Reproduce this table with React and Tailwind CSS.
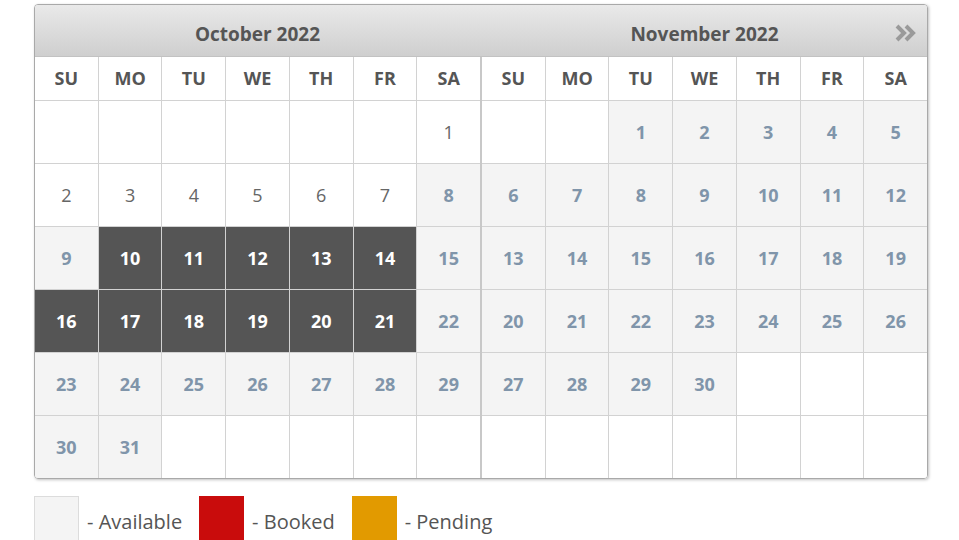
import React from "react";

const DOW = ["SU", "MO", "TU", "WE", "TH", "FR", "SA"];

const october = (() => {
  const cells = Array(6).fill(null);
  for (let d = 1; d <= 31; d++) {
    let type = "available";
    if (d <= 7) type = "past";
    if ((d >= 10 && d <= 14) || (d >= 16 && d <= 21)) type = "booked";
    cells.push({ d, type });
  }
  while (cells.length < 42) cells.push(null);
  return cells;
})();

const november = (() => {
  const cells = Array(2).fill(null);
  for (let d = 1; d <= 30; d++) cells.push({ d, type: "available" });
  while (cells.length < 42) cells.push(null);
  return cells;
})();

function Cell({ cell }) {
  if (!cell) return <div className="bg-white h-[62px]" />;
  if (cell.type === "past")
    return (
      <div className="bg-white h-[62px] flex items-center justify-center text-[18px] text-[#666]">
        {cell.d}
      </div>
    );
  if (cell.type === "booked")
    return (
      <div className="bg-[#555555] h-[62px] flex items-center justify-center text-[18px] font-bold text-white">
        {cell.d}
      </div>
    );
  return (
    <div className="bg-[#f4f4f4] h-[62px] flex items-center justify-center text-[18px] font-bold text-[#8095aa]">
      {cell.d}
    </div>
  );
}

function Month({ cells }) {
  return (
    <div className="grid grid-cols-7 gap-px bg-[#d2d2d2] flex-1">
      {DOW.map((d) => (
        <div
          key={d}
          className="bg-white h-[43px] flex items-center justify-center text-[18px] font-bold text-[#555]"
        >
          {d}
        </div>
      ))}
      {cells.map((c, i) => (
        <Cell key={i} cell={c} />
      ))}
    </div>
  );
}

function Legend({ box, label }) {
  return (
    <div className="flex items-start gap-[8px]">
      <div className={`w-[45px] h-[45px] ${box}`} />
      <span className="text-[20px] text-[#555] mt-[11px]">{label}</span>
    </div>
  );
}

export default function App() {
  return (
    <div className="w-[959px] h-[540px] bg-white overflow-hidden" style={{ fontFamily: "'Open Sans', sans-serif" }}>
      <div className="ml-[34px] mt-[4px] w-[894px] border border-[#a9a9a9] rounded-[4px] shadow-[1px_1px_3px_rgba(0,0,0,0.25)] overflow-hidden">
        <div className="relative h-[52px] flex bg-gradient-to-b from-[#e9e9e9] to-[#cfcfcf] border-b border-[#c2c2c2]">
          <div className="flex-1 flex items-center justify-center text-[19px] font-bold text-[#555] pt-[7px]">
            October 2022
          </div>
          <div className="w-[2px]" />
          <div className="flex-1 flex items-center justify-center text-[19px] font-bold text-[#555] pt-[7px]">
            November 2022
          </div>
          <svg
            className="absolute right-[10px] top-[19px]"
            width="22"
            height="18"
            viewBox="0 0 22 18"
          >
            <path d="M2 2 L9 9 L2 16" fill="none" stroke="#9a9a9a" strokeWidth="4" />
            <path d="M11 2 L18 9 L11 16" fill="none" stroke="#9a9a9a" strokeWidth="4" />
          </svg>
        </div>
        <div className="flex bg-[#d2d2d2]">
          <Month cells={october} />
          <div className="w-[2px] bg-[#c8c8c8]" />
          <Month cells={november} />
        </div>
      </div>
      <div className="ml-[34px] mt-[17px] flex gap-[17px]">
        <Legend box="bg-[#f4f4f4] border border-[#dcdcdc]" label="- Available" />
        <Legend box="bg-[#c90c0c]" label="- Booked" />
        <Legend box="bg-[#e29a00]" label="- Pending" />
      </div>
    </div>
  );
}
